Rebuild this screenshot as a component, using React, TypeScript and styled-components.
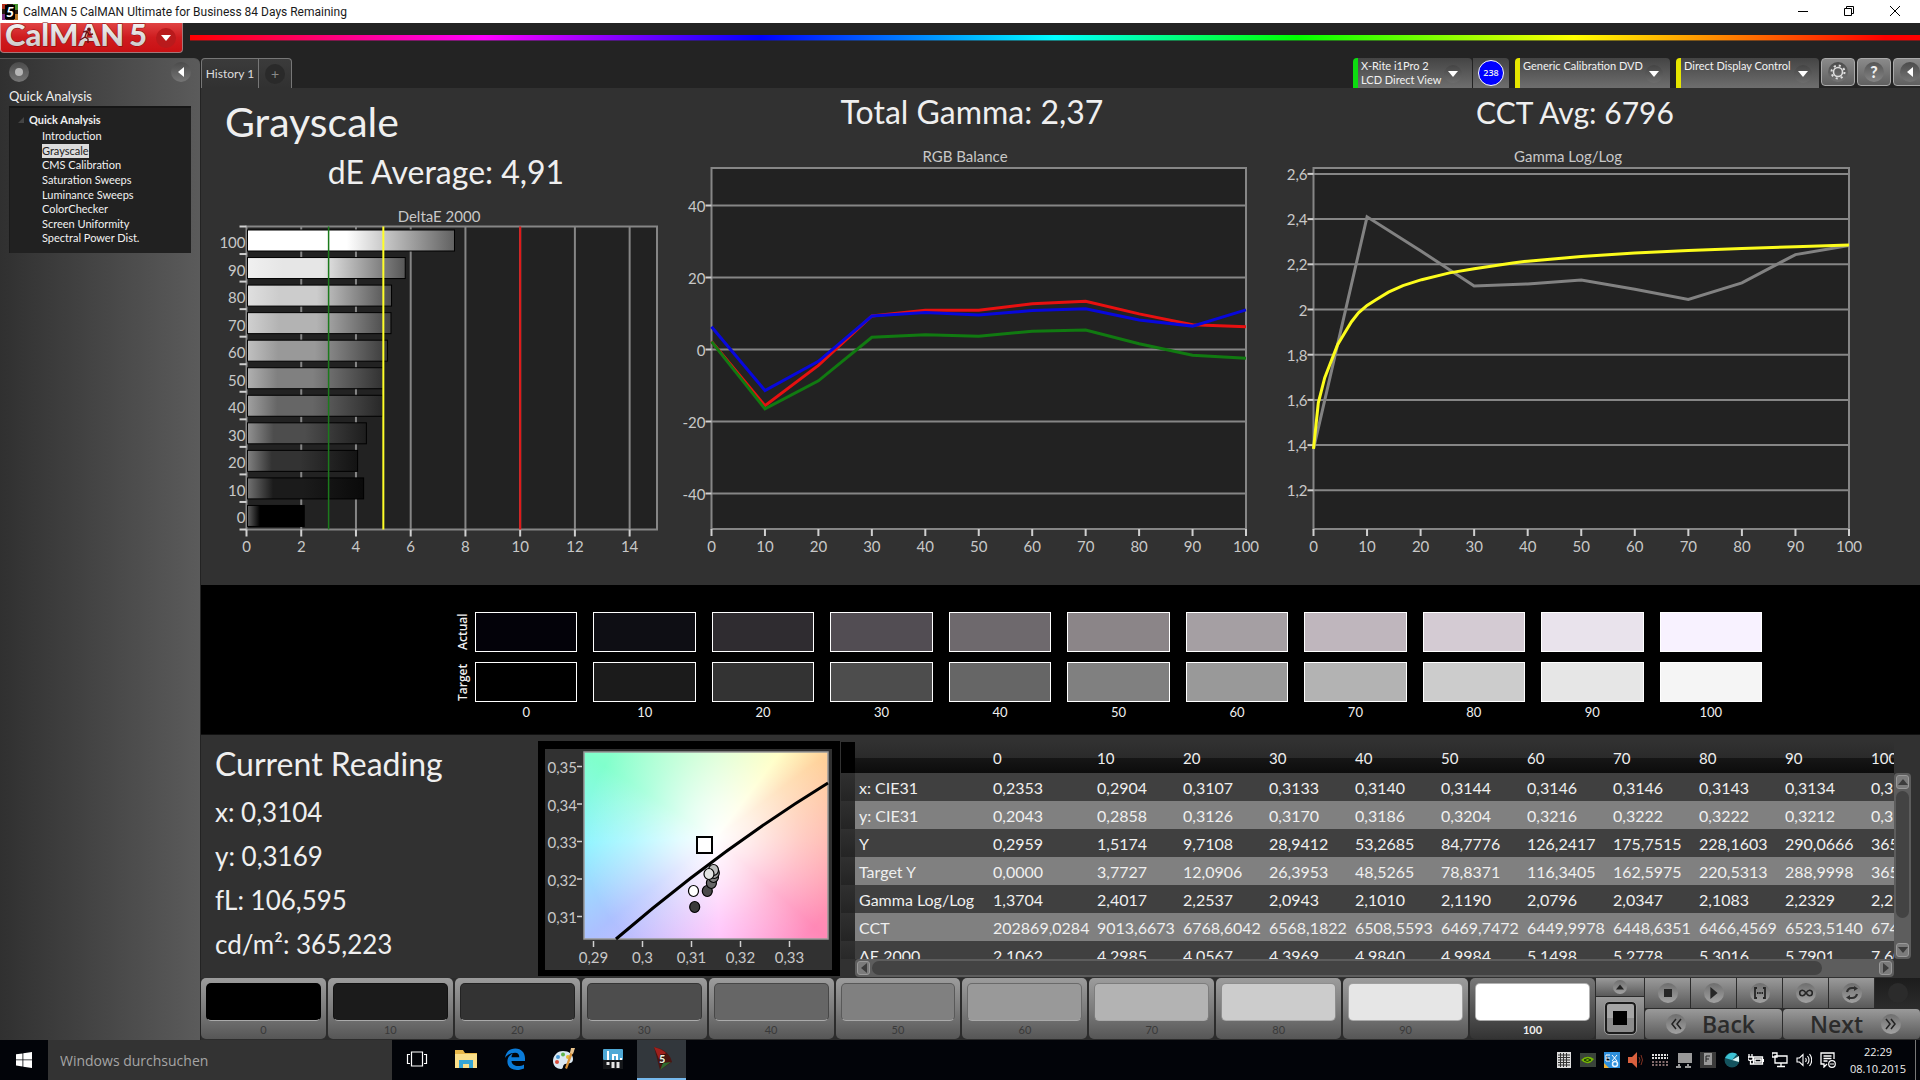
import React from "react";
import styled, { createGlobalStyle, css } from "styled-components";

const Global = createGlobalStyle`
  *, *::before, *::after { box-sizing: border-box; }
  body { margin: 0; background: #232323; font-family: Lato, "Liberation Sans", sans-serif; color: #efefef; }
  button, input { font-family: inherit; color: inherit; border: 0; margin: 0; padding: 0; background: none; }
  h1, h2, h3, p, ul { margin: 0; padding: 0; font-weight: 400; list-style: none; }
  svg { display: block; }
`;

/* ---------- data ---------- */

const LEVELS = [0, 10, 20, 30, 40, 50, 60, 70, 80, 90, 100];
const TARGET = ["#000000", "#1b1b1b", "#333333", "#4d4d4d", "#666666", "#808080", "#999999", "#b3b3b3", "#cccccc", "#e6e6e6", "#f5f5f5"];
const ACTUAL = ["#030209", "#0e0e14", "#2f2c30", "#524d53", "#6e696d", "#8b8588", "#a59fa3", "#bfb6bd", "#d4cbd3", "#e9e3ec", "#f8f2ff"];
const PATTERN = [...TARGET.slice(0, 10), "#ffffff"];
const DELTA_E = [2.11, 4.28, 4.06, 4.38, 4.98, 5, 5.15, 5.28, 5.3, 5.8, 7.6];

const RED = [2.2, -15.6, -4.4, 9.3, 10.9, 10.9, 12.7, 13.4, 9.9, 6.9, 6.3];
const BLUE = [6.3, -11.4, -3.3, 9.3, 10.3, 9.6, 10.8, 11.3, 8.2, 6.5, 11];
const GREEN = [2.2, -16.5, -8.7, 3.4, 4.1, 3.7, 5.1, 5.4, 1.6, -1.6, -2.4];

const GAMMA: [number, number][] = [
  [0, 1.383], [10, 2.41], [20, 2.26], [30, 2.104], [40, 2.113], [50, 2.13], [60, 2.09], [70, 2.044], [80, 2.118], [90, 2.243], [100, 2.283],
];
const GAMMA_TARGET: [number, number][] = [
  [0, 1.383], [0.9, 1.587], [2.1, 1.698], [4.5, 1.844], [5.7, 1.892], [7.1, 1.946], [8.4, 1.985], [10, 2.018], [11.6, 2.042],
  [14, 2.077], [16.7, 2.106], [20.2, 2.132], [25.4, 2.162], [30, 2.18], [37.2, 2.206], [40, 2.214], [50, 2.235], [60, 2.25],
  [70, 2.261], [80, 2.27], [90, 2.278], [100, 2.285],
];

const ROWS: [string, string[]][] = [
  ["x: CIE31", ["0,2353", "0,2904", "0,3107", "0,3133", "0,3140", "0,3144", "0,3146", "0,3146", "0,3143", "0,3134", "0,3104"]],
  ["y: CIE31", ["0,2043", "0,2858", "0,3126", "0,3170", "0,3186", "0,3204", "0,3216", "0,3222", "0,3222", "0,3212", "0,3169"]],
  ["Y", ["0,2959", "1,5174", "9,7108", "28,9412", "53,2685", "84,7776", "126,2417", "175,7515", "228,1603", "290,0666", "365,2230"]],
  ["Target Y", ["0,0000", "3,7727", "12,0906", "26,3953", "48,5265", "78,8371", "116,3405", "162,5975", "220,5313", "288,9998", "365,2230"]],
  ["Gamma Log/Log", ["1,3704", "2,4017", "2,2537", "2,0943", "2,1010", "2,1190", "2,0796", "2,0347", "2,1083", "2,2329", "2,2761"]],
  ["CCT", ["202869,0284", "9013,6673", "6768,6042", "6568,1822", "6508,5593", "6469,7472", "6449,9978", "6448,6351", "6466,4569", "6523,5140", "6743,2210"]],
  ["ΔE 2000", ["2,1062", "4,2985", "4,0567", "4,3969", "4,9840", "4,9984", "5,1498", "5,2778", "5,3016", "5,7901", "7,6012"]],
];

const PAGES = ["Introduction", "Grayscale", "CMS Calibration", "Saturation Sweeps", "Luminance Sweeps", "ColorChecker", "Screen Uniformity", "Spectral Power Dist."];

/* ---------- frame ---------- */

const Screen = styled.div`
  min-height: 100vh;
  display: flex;
  flex-direction: column;
  overflow: hidden;
`;

const TitleBar = styled.header`
  height: 23px;
  display: flex;
  align-items: center;
  padding-right: 2px;
  background: #fff;
  color: #1a1a1a;
  font-family: Roboto, "Open Sans", sans-serif;
  font-size: 12px;
`;
const TitleIcon = styled.svg`
  width: 16px;
  height: 16px;
  margin: 0 5px 0 2px;
`;
const TitleText = styled.span`
  flex: 1;
`;
const WindowButton = styled.button`
  width: 46px;
  height: 22px;
  display: grid;
  place-items: center;
  padding-bottom: 2px;
`;

const Header = styled.div`
  height: 35px;
  display: flex;
  align-items: flex-start;
  gap: 7px;
  background: #232323;
`;
const Logo = styled.button`
  width: 183px;
  height: 30px;
  display: flex;
  align-items: center;
  justify-content: space-between;
  padding: 0 6px 0 4px;
  background: linear-gradient(#e04343, #cf1c1f 50%, #c91013);
  border: 1px solid #a3777a;
  border-top: 0;
  border-left-color: #d88;
  border-radius: 0 0 4px 4px;
`;
const LogoSvg = styled.svg`
  overflow: visible;
`;
const MenuDisc = styled.span`
  width: 20px;
  height: 20px;
  flex: none;
  display: grid;
  place-items: center;
  border-radius: 50%;
  background: #b91a1c;
`;
const Rainbow = styled.div`
  flex: 1;
  height: 6px;
  margin-top: 12px;
  background: linear-gradient(90deg, #f00, #f0f 17%, #00f 33%, #0ff 50%, #0f0 64%, #ff0 80%, #f00 98%);
  border-bottom: 1px solid rgba(40, 40, 40, 0.6);
`;

const Body = styled.div`
  flex: 1;
  display: grid;
  grid-template-columns: 200px minmax(0, 1fr);
  column-gap: 1px;
`;

/* ---------- sidebar ---------- */

const Sidebar = styled.aside`
  background: linear-gradient(90deg, #303030, #5b5b5b);
  border-radius: 0 6px 0 0;
  border-top: 1px solid #555;
`;
const SideTools = styled.div`
  display: flex;
  justify-content: space-between;
  padding: 3px 9px 0;
`;
const Knob = styled.button`
  width: 20px;
  height: 20px;
  flex: none;
  display: grid;
  place-items: center;
  border-radius: 50%;
  background: linear-gradient(#4b4b4b, #757575);
`;
const SideTitle = styled.h2`
  padding: 5px 9px 0;
  font-size: 13px;
  line-height: 19px;
`;
const TreeBox = styled.nav`
  margin: 0 9px;
  height: 147px;
  padding: 4px 0 0 14px;
  background: #212121;
  border-top: 2px solid #161616;
  border-left: 1px solid #1a1a1a;
`;
const TreeHead = styled.h3`
  display: flex;
  align-items: center;
  gap: 5px;
  margin: 0 0 2px -6px;
  font-size: 11px;
  line-height: 15px;
  font-weight: 700;
`;
const TreeList = styled.ul`
  display: grid;
  grid-auto-rows: 1fr;
  height: 117px;
  padding-left: 18px;
  font-size: 11px;
  line-height: 14px;
`;
const TreeLink = styled.a<{ $active?: boolean }>`
  display: block;
  width: fit-content;
  color: ${(p) => (p.$active ? "#222" : "#f2f2f2")};
  background: ${(p) => (p.$active ? "#dcdcdc" : "transparent")};
  text-decoration: none;
`;

/* ---------- tab strip ---------- */

const Main = styled.main`
  display: flex;
  flex-direction: column;
  background: #313131;
`;
const TabStrip = styled.div`
  height: 30px;
  display: flex;
  background: #232323;
  overflow: hidden;
`;
const Tab = styled.button<{ $last?: boolean }>`
  width: ${(p) => (p.$last ? 33 : 58)}px;
  display: grid;
  place-items: center;
  font-size: 12px;
  color: #ddd;
  background: linear-gradient(#3b3b3b, #313131);
  border: 1px solid #777;
  border-bottom: 0;
  border-left-width: ${(p) => (p.$last ? 0 : 1)}px;
  border-radius: ${(p) => (p.$last ? "0 4px 0 0" : "4px 0 0 0")};
`;
const PlusKnob = styled.span`
  width: 20px;
  height: 20px;
  border-radius: 50%;
  background: #2a2a2a;
  color: #888;
  font-size: 14px;
  line-height: 19px;
`;
const Devices = styled.div`
  flex: none;
  display: flex;
  margin: 0 -7px 0 auto;
`;
const Device = styled.button<{ $tone: string; $width: number; $end: number }>`
  width: ${(p) => p.$width}px;
  height: 30px;
  display: flex;
  align-items: flex-start;
  justify-content: space-between;
  padding: 1px ${(p) => p.$end}px 0 3px;
  font-size: 11px;
  line-height: 14px;
  text-align: left;
  white-space: nowrap;
  color: #f2f2f2;
  background: linear-gradient(#444, #6e6e6e);
  border-left: 5px solid ${(p) => p.$tone};
  border-radius: 4px 4px 0 0;
`;
const DeviceGap = styled.span`
  width: 6px;
`;
const DropKnob = styled.span`
  width: 18px;
  height: 18px;
  margin-top: 6px;
  display: grid;
  place-items: center;
  border-radius: 50%;
  background: linear-gradient(#444, #6d6d6d);
`;
const Counter = styled.div`
  width: 36px;
  margin: 0 6px 0 1px;
  display: grid;
  place-items: center;
  background: linear-gradient(#444, #6e6e6e);
  border-radius: 0 4px 0 0;
`;
const CounterDot = styled.span`
  width: 26px;
  height: 26px;
  border: 1px solid #fff;
  border-radius: 50%;
  background: #00f;
  font-family: "Open Sans", sans-serif;
  font-size: 9px;
  line-height: 24px;
  font-weight: 600;
  text-align: center;
`;
const ToolButton = styled.button`
  width: 34px;
  height: 28px;
  margin-left: 2px;
  display: grid;
  place-items: center;
  border: 1px solid #aaa;
  border-radius: 4px;
  background: linear-gradient(#8a8a8a, #606060);
`;
const HelpKnob = styled.span`
  width: 20px;
  height: 20px;
  border-radius: 50%;
  background: linear-gradient(#555, #858585);
  font-size: 16px;
  line-height: 20px;
  font-weight: 900;
  text-align: center;
`;

/* ---------- chart row ---------- */

const Charts = styled.section`
  display: grid;
  grid-template-columns: 479fr 600fr 640fr;
`;
const ChartCell = styled.div`
  min-width: 0;
`;
const PageTitle = styled.h1`
  padding-left: 24px;
  font-size: 41px;
  line-height: 67px;
`;
const Figure = styled.h2<{ $height: number; $size?: number; $left?: number; $right?: number }>`
  padding-left: ${(p) => p.$left ?? 0}px;
  padding-right: ${(p) => p.$right ?? 0}px;
  font-size: ${(p) => p.$size ?? 32}px;
  line-height: ${(p) => p.$height}px;
  text-align: center;
`;
const ChartSvg = styled.svg`
  width: 100%;
  height: auto;
  fill: none;
  text {
    font-family: Lato, sans-serif;
    font-size: 15px;
    fill: #c8c8c8;
  }
`;

const GRID = "#868686";
const TICK = "#d0d0d0";

function mix(hex: string, toward: number, amount: number) {
  const c = parseInt(hex.slice(1, 3), 16);
  const v = Math.round(c + (toward - c) * amount);
  return `rgb(${v},${v},${v})`;
}

function DeltaEChart() {
  const x0 = 45.5, x1 = 456, y0 = 38.5, y1 = 341.5;
  const unit = (x1 - x0) / 15;
  const bin = (y1 - y0) / 11;
  return (
    <ChartSvg viewBox="0 0 479 397" role="img" aria-label="DeltaE 2000">
      <defs>
        {PATTERN.map((c, i) => (
          <linearGradient id={`bar${i}`} key={c}>
            <stop offset="0" stopColor={mix(c, 255, 0.38)} />
            <stop offset="0.22" stopColor={c} />
            <stop offset="0.48" stopColor={c} />
            <stop offset="1" stopColor={mix(c, 0, 0.62)} />
          </linearGradient>
        ))}
      </defs>
      <text x="238" y="34" textAnchor="middle">DeltaE 2000</text>
      <rect x={x0} y={y0} width={x1 - x0} height={y1 - y0} fill="#222" stroke={GRID} strokeWidth="2" />
      {[2, 4, 6, 8, 10, 12, 14].map((v) => (
        <path key={v} d={`M${x0 + v * unit} ${y0}V${y1}`} stroke={GRID} strokeWidth="2" />
      ))}
      {[0, 2, 4, 6, 8, 10, 12, 14].map((v) => (
        <g key={v}>
          <path d={`M${x0 + v * unit} ${y1}v7`} stroke={TICK} strokeWidth="2" />
          <text x={x0 + v * unit} y="364" textAnchor="middle">{v}</text>
        </g>
      ))}
      {Array.from({ length: 12 }, (_, i) => (
        <path key={i} d={`M${x0 - 7} ${y0 + i * bin}h7`} stroke={TICK} strokeWidth="2" />
      ))}
      {LEVELS.map((level, i) => {
        const top = y1 - (i + 1) * bin + 3.5;
        return (
          <g key={level}>
            <rect x={x0 + 1} y={top} width={DELTA_E[i] * unit - 1} height="21" fill={`url(#bar${i})`} stroke="#000" />
            <text x={x0 - 1} y={top + 18} textAnchor="end">{level}</text>
          </g>
        );
      })}
      <path d={`M${x0 + 3 * unit} ${y0}V${y1}`} stroke="#1c7a1c" strokeWidth="1.5" />
      <path d={`M${x0 + 5 * unit} ${y0}V${y1}`} stroke="#ffff28" strokeWidth="2" />
      <path d={`M${x0 + 10 * unit} ${y0}V${y1}`} stroke="#e01818" strokeWidth="2" />
    </ChartSvg>
  );
}

type Line = { color: string; width: number; points: [number, number][] };

function LineChart(props: {
  title: string; width: number; titleX: number; left: number; right: number;
  marks: { value: number; label: string }[]; base: number; baseY: number; scale: number; lines: Line[];
}) {
  const { left, right, base, baseY, scale } = props;
  const top = 32, bottom = 393;
  const px = (v: number) => left + ((right - left) * v) / 100;
  const py = (v: number) => baseY - (v - base) * scale;
  return (
    <ChartSvg viewBox={`0 0 ${props.width} 449`} role="img" aria-label={props.title}>
      <text x={props.titleX} y="26" textAnchor="middle">{props.title}</text>
      <rect x={left} y={top} width={right - left} height={bottom - top} fill="#222" stroke={GRID} strokeWidth="2" />
      {props.marks.map((m) => (
        <g key={m.label}>
          <path d={`M${left} ${py(m.value)}H${right}`} stroke={GRID} strokeWidth="2" />
          <path d={`M${left - 6} ${py(m.value)}h6`} stroke={TICK} strokeWidth="2" />
          <text x={left - 6} y={py(m.value) + 6} textAnchor="end">{m.label}</text>
        </g>
      ))}
      {LEVELS.map((v) => (
        <g key={v}>
          <path d={`M${px(v)} ${bottom}v7`} stroke={TICK} strokeWidth="2" />
          <text x={px(v)} y="416" textAnchor="middle">{v}</text>
        </g>
      ))}
      {props.lines.map((l) => (
        <polyline key={l.color} points={l.points.map(([x, y]) => `${px(x)},${py(y)}`).join(" ")} stroke={l.color} strokeWidth={l.width} />
      ))}
    </ChartSvg>
  );
}

const byLevel = (values: number[]) => values.map((v, i) => [i * 10, v] as [number, number]);

/* ---------- swatches ---------- */

const SwatchBand = styled.section`
  height: 149px;
  padding: 27px 158px 0 251px;
  background: #000;
  display: grid;
  grid-template-columns: 23px minmax(0, 1fr);
  grid-template-rows: 40px 40px 20px;
  row-gap: 10px;
`;
const BandLabel = styled.span`
  writing-mode: vertical-rl;
  transform: rotate(180deg);
  margin-left: 2px;
  font-family: "Open Sans", sans-serif;
  font-size: 12px;
  font-weight: 600;
  line-height: 18px;
  text-align: center;
`;
const SwatchRow = styled.div`
  display: grid;
  grid-template-columns: repeat(11, minmax(0, 1fr));
  column-gap: 16px;
`;
const Swatch = styled.div<{ $color: string }>`
  border: 1px solid #fff;
  background: ${(p) => p.$color};
`;
const SwatchLabel = styled.span`
  margin-top: -8px;
  font-size: 13px;
  line-height: 16px;
  text-align: center;
`;

/* ---------- lower row ---------- */

const Lower = styled.section`
  flex: 1;
  display: grid;
  grid-template-columns: 337px 302px minmax(0, 1fr);
  border-top: 1px solid #111;
`;
const Reading = styled.div`
  padding: 3px 0 0 14px;
`;
const ReadingTitle = styled.h2`
  font-size: 32px;
  line-height: 52px;
`;
const ReadingLine = styled.p`
  font-size: 26px;
  line-height: 44px;
`;
const CieBox = styled.div`
  margin-top: 6px;
  height: 235px;
  background: #000;
`;
const CieSvg = styled.svg`
  width: 100%;
  height: auto;
  text {
    font-family: Lato, sans-serif;
    font-size: 15px;
    fill: #c8c8c8;
  }
`;
const Gamut = styled.div`
  width: 100%;
  height: 100%;
  background:
    radial-gradient(circle at 54% 46%, #fff 0, rgba(255, 255, 255, 0.75) 22%, rgba(255, 255, 255, 0.35) 50%, rgba(255, 255, 255, 0) 80%),
    conic-gradient(from 0deg at 54% 46%, #cfffc8 0deg, #ffffb8 37deg, #ffd29a 53deg, #ffb4a8 90deg, #ff88b6 132deg, #ffb4fa 178deg, #acc0ff 232deg, #90f4ff 268deg, #80ffcc 303deg, #cfffc8 360deg);
`;

function CieChart() {
  const dots: [number, number, string][] = [
    [156.7, 166, "#3a3a3a"], [169.3, 150, "#4a4a4a"], [173.4, 142, "#666"], [175.5, 136, "#808080"],
    [176.3, 132, "#999"], [175.5, 129, "#bdbdbd"], [171, 133, "#e2e2e2"], [155.5, 150, "#fff"],
  ];
  return (
    <CieSvg viewBox="0 0 302 235" role="img" aria-label="CIE chromaticity">
      <rect x="7" y="8" width="287" height="221" fill="#313131" />
      <foreignObject x="46" y="11" width="244" height="187"><Gamut /></foreignObject>
      <rect x="46" y="11" width="244" height="187" fill="none" stroke="#999" strokeWidth="1.5" />
      {["0,35", "0,34", "0,33", "0,32", "0,31"].map((t, i) => (
        <g key={t}>
          <path d={`M39 ${25.5 + i * 37.5}h5`} stroke={TICK} strokeWidth="1.5" />
          <text x="39" y={32 + i * 37.5} textAnchor="end">{t}</text>
        </g>
      ))}
      {["0,29", "0,3", "0,31", "0,32", "0,33"].map((t, i) => (
        <g key={t}>
          <path d={`M${55.5 + i * 49} 200v6`} stroke={TICK} strokeWidth="1.5" />
          <text x={55.5 + i * 49} y="222" textAnchor="middle">{t}</text>
        </g>
      ))}
      <path d="M78 198Q184 107 290 42" fill="none" stroke="#000" strokeWidth="3" />
      <rect x="159" y="96" width="15" height="16" fill="#fff" stroke="#000" strokeWidth="2" />
      {dots.map(([x, y, c]) => <ellipse key={c} cx={x} cy={y} rx="5" ry="5.5" fill={c} stroke="#000" strokeWidth="1.2" />)}
    </CieSvg>
  );
}

const Viewer = styled.div`
  margin: 7px 9px 0 1px;
  display: grid;
  grid-template-columns: 14px minmax(0, 1fr) 17px;
  grid-template-rows: 217px 18px;
`;
const TableClip = styled.div`
  grid-column: 1 / 3;
  overflow: hidden;
`;
const Table = styled.table`
  width: 1112px;
  table-layout: fixed;
  border-collapse: collapse;
  font-size: 16px;
  text-align: left;
  white-space: nowrap;
`;
const HeadRow = styled.tr`
  height: 31px;
  background: linear-gradient(#313131, #2a2a2a 50%, #161616 52%, #0c0c0c);
`;
const DataRow = styled.tr`
  height: 28px;
  background: #404040;
  &:nth-child(even) { background: #808080; }
`;
const Cell = styled.td`
  padding: 0 0 0 4px;
`;
const Label = styled.th`
  padding: 0 0 0 4px;
  font-weight: 400;
`;
const HeadCell = styled.th`
  padding: 0 0 0 4px;
  font-size: 15px;
  font-weight: 400;
`;
const RowMark = styled.td<{ $head?: boolean }>`
  padding: 0;
  background: ${(p) => (p.$head ? "#000" : "linear-gradient(#303030, #242424)")};
`;
const track = css`
  display: flex;
  background: #5d5d5d;
  border-radius: 4px;
  gap: 2px;
  padding: 2px;
`;
const VScroll = styled.div`
  ${track}
  flex-direction: column;
  margin-top: 31px;
`;
const HScroll = styled.div`
  ${track}
  grid-column: 2;
`;
const ScrollButton = styled.button`
  flex: none;
  width: 13px;
  height: 14px;
  display: grid;
  place-items: center;
  border: 1px solid #999;
  border-radius: 3px;
  background: #7b7b7b;
`;
const Thumb = styled.div<{ $grow: number }>`
  flex: ${(p) => p.$grow};
  border-radius: 7px;
  background: #434343;
`;
const Gap = styled.div<{ $grow: number }>`
  flex: ${(p) => p.$grow};
`;

/* ---------- pattern bar ---------- */

const PatternBar = styled.section`
  height: 62px;
  display: grid;
  grid-template-columns: minmax(0, 1fr) 48px 275px;
  column-gap: 1px;
  background: #2c2c2c;
`;
const Patterns = styled.div`
  display: grid;
  grid-template-columns: repeat(11, minmax(0, 1fr));
  column-gap: 2px;
`;
const PatternButton = styled.button<{ $active: boolean }>`
  height: 61px;
  padding: 4px 5px 0;
  border-radius: 5px;
  font-size: 11px;
  font-weight: ${(p) => (p.$active ? 700 : 400)};
  line-height: 18px;
  color: ${(p) => (p.$active ? "#eee" : "#3a3a3a")};
  background: ${(p) => (p.$active ? "linear-gradient(#777, #333)" : "linear-gradient(#9c9c9c, #7d7d7d 50%, #565656)")};
`;
const PatternSwatch = styled.span<{ $color: string }>`
  display: block;
  height: 38px;
  border: 1px solid rgba(0, 0, 0, 0.3);
  border-bottom-color: #aaa;
  border-radius: 5px;
  background: ${(p) => p.$color};
`;
const Stack = styled.div`
  height: 61px;
  display: grid;
  grid-template-rows: 18px 1fr;
  row-gap: 1px;
`;
const BarButton = styled.button<{ $dim?: boolean }>`
  display: flex;
  align-items: center;
  justify-content: center;
  background: ${(p) => (p.$dim ? "linear-gradient(#1c1c1c, #2b2b2b)" : "linear-gradient(#9a9a9a, #595959)")};
`;
const Transport = styled.div`
  height: 61px;
  display: grid;
  grid-template-columns: repeat(6, 1fr);
  grid-template-rows: 1fr 1fr;
  gap: 1px;
`;
const NavButton = styled(BarButton)<{ $forward?: boolean }>`
  grid-column: span 3;
  gap: ${(p) => (p.$forward ? 18 : 16)}px;
  padding: ${(p) => (p.$forward ? "0 0 0 8px" : "0 6px 0 0")};
  border-radius: 4px;
  color: #2b2b2b;
  font-family: "Open Sans", "Noto Sans", sans-serif;
  font-size: 23px;
  font-weight: 600;
  line-height: 28px;
`;
const Disc = styled.span<{ $size?: number; $dim?: boolean }>`
  width: ${(p) => p.$size ?? 20}px;
  height: ${(p) => p.$size ?? 20}px;
  flex: none;
  display: grid;
  place-items: center;
  border-radius: 50%;
  background: ${(p) => (p.$dim ? "#2b2b2b" : "linear-gradient(#6e6e6e, #a2a2a2)")};
`;
const WindowFrame = styled.span`
  width: 31px;
  height: 32px;
  display: grid;
  place-items: center;
  border: 2px solid #1b1b1b;
  border-radius: 4px;
  outline: 1px solid #9a9a9a;
  background: linear-gradient(#a5a5a5 50%, #8b8b8b 50%);
`;
const Center = styled.span`
  width: 14px;
  height: 14px;
  background: #000;
`;

/* ---------- taskbar ---------- */

const Taskbar = styled.footer`
  height: 40px;
  display: flex;
  background: #020409;
  font-family: "Open Sans", "Noto Sans", sans-serif;
`;
const Start = styled.button`
  width: 48px;
  display: grid;
  place-items: center;
`;
const Search = styled.input`
  width: 344px;
  padding: 0 12px;
  background: #333;
  font-size: 14px;
  &::placeholder { color: #a5a5a5; opacity: 1; }
`;
const AppButton = styled.button<{ $active?: boolean }>`
  width: 49px;
  display: grid;
  place-items: center;
  background: ${(p) => (p.$active ? "#32373c" : "transparent")};
  border-bottom: 2px solid ${(p) => (p.$active ? "#76b9ed" : "transparent")};
`;
const Tray = styled.div`
  margin-left: auto;
  display: flex;
  align-items: center;
`;
const TrayButton = styled.button`
  width: 24px;
  height: 24px;
  display: grid;
  place-items: center;
`;
const Clock = styled.time`
  width: 72px;
  margin: 0 1px 0 2px;
  font-size: 11px;
  line-height: 17px;
  text-align: center;
`;
const PeekButton = styled.button`
  width: 5px;
  height: 40px;
  border-left: 1px solid #777;
`;

/* ---------- drawings ---------- */

const Triangle = ({ d, size = 10, color = "#fff" }: { d: "up" | "down" | "left" | "right"; size?: number; color?: string }) => {
  const path = { up: "M0 8L5 2l5 6z", down: "M0 2h10L5 8z", left: "M8 0v10L2 5z", right: "M2 0v10l6-5z" }[d];
  return <svg width={size} height={size} viewBox="0 0 10 10"><path d={path} fill={color} /></svg>;
};

const LogoMark = () => (
  <LogoSvg width="146" height="30" viewBox="0 0 146 30">
    <defs>
      <linearGradient id="steel" x2="0" y2="1"><stop stopColor="#fff" /><stop offset="1" stopColor="#c4c0c0" /></linearGradient>
    </defs>
    <g fontFamily="Lato, sans-serif" fontWeight="900" fontSize="31">
      <text x="0" y="23" fill="url(#steel)" stroke="#7c0b0d" strokeWidth="1" paintOrder="stroke">CalMAN</text>
      <text x="124" y="23" fill="url(#steel)" stroke="#7c0b0d" strokeWidth="1" paintOrder="stroke">5</text>
    </g>
    <g stroke="#6d1214" strokeWidth="1.4" fill="none">
      <circle cx="84" cy="6.500" r="1.200" fill="#6d1214" />
      <path d="M78 9l4-1 2 4 4-1M82 8l-2 6 3 2 0 4M80 14l-5 3" />
    </g>
  </LogoSvg>
);

const AppIcon = () => (
  <TitleIcon viewBox="0 0 16 16">
    <rect width="16" height="16" fill="#2a1a10" />
    <path d="M0 0h5v5H0z" fill="#b0301c" /><path d="M11 0h5v6h-5z" fill="#46922e" /><path d="M0 10h4v6H0z" fill="#7d2f86" /><path d="M12 10h4v6h-4z" fill="#c07a2a" />
    <rect x="3" y="1" width="10" height="14" fill="#000" />
    <text x="4" y="13" fontFamily="Lato, sans-serif" fontSize="14" fontWeight="900" fontStyle="italic" fill="#fff">5</text>
  </TitleIcon>
);

const Gear = () => (
  <svg width="18" height="18" viewBox="0 0 18 18" fill="none" stroke="#dedede">
    <circle cx="9" cy="9" r="4.500" strokeWidth="1.600" />
    <circle cx="9" cy="9" r="6.500" strokeWidth="2" strokeDasharray="2.100 3" />
  </svg>
);

const Chevrons = ({ right }: { right?: boolean }) => (
  <svg width="12" height="12" viewBox="0 0 12 12" fill="none" stroke="#222" strokeWidth="1.500">
    <path d={right ? "M1 1l4 5-4 5M6 1l4 5-4 5" : "M6 1L2 6l4 5M11 1L7 6l4 5"} />
  </svg>
);

const WinLogo = () => (
  <svg width="16" height="16" viewBox="0 0 16 16" fill="#fff"><path d="M0 2.300L6.500 1.400v6.100H0zM7.300 1.300L16 0v7.500H7.300zM0 8.300h6.500v6.200L0 13.600zM7.300 8.300H16V16l-8.700-1.300z" /></svg>
);
const TaskView = () => (
  <svg width="22" height="16" viewBox="0 0 22 16" fill="none" stroke="#fff" strokeWidth="1.200"><path d="M5.500 1h11v14h-11zM4 3.500H1.500v9H4M18 3.500h2.500v9H18" /></svg>
);
const Explorer = () => (
  <svg width="24" height="20" viewBox="0 0 24 20">
    <path d="M1 1h8l2 3h12v15H1z" fill="#e9b94a" /><path d="M1 5h22v14H1z" fill="#fbe08a" />
    <path d="M5 19v-8h14v8h-4v-4H9v4z" fill="#35a6d6" />
  </svg>
);
const Edge = () => (
  <svg width="22" height="22" viewBox="0 0 22 22" fill="#0a7bd8">
    <path d="M1 10C1.800 3.800 6 .5 11.300.5 17.500.5 21 5 21 10.300V13H7.500c.2 3.500 3.300 5 6.500 5 2.400 0 4.500-.7 6-1.600v4.100c-2 .9-4.300 1.500-7 1.500-6 0-9.600-3.500-9.600-8.400 0-3.700 2-6.700 5.600-8.100C7.900 6.500 7.600 8 7.500 9.200h7.800c0-2.700-1.200-4.500-4.200-4.500C7.300 4.700 3.500 6.600 1 10z" />
  </svg>
);
const Paint = () => (
  <svg width="24" height="24" viewBox="0 0 24 24">
    <path d="M11 4C5 4 1 9 1 14c0 5 4 8 8 8 3 0 1-4 4-5 4-1 8 0 8-5 0-5-4-8-10-8z" fill="#dbe8f2" />
    <circle cx="6" cy="10" r="2" fill="#4b9bd8" /><circle cx="11" cy="7.500" r="2" fill="#5fb54c" /><circle cx="16" cy="10" r="2" fill="#e8b830" /><circle cx="5" cy="15" r="2" fill="#d94c3c" />
    <path d="M20 1l2 2-7 19-2-1z" fill="#d8923a" /><path d="M19 1h4l-2 6-3-1z" fill="#e9c48d" />
  </svg>
);
const Mixer = () => (
  <svg width="22" height="22" viewBox="0 0 22 22">
    <rect x="1" y="1" width="20" height="11" rx="1" fill="#4fa9d6" /><rect x="1" y="12" width="20" height="9" fill="#15171a" />
    <path d="M6 3v9M11 6v6M11 7h4v5M19 10v2" stroke="#fff" strokeWidth="2" fill="none" /><path d="M6 14v3M11 14v6M16 14v6" stroke="#e8e8e8" strokeWidth="3" />
  </svg>
);
const CalmanApp = () => (
  <svg width="20" height="24" viewBox="0 0 20 24">
    <path d="M2 0Q17 3 20 15L8 23z" fill="#4b1512" /><path d="M2 0Q10 2 14 6L7 12z" fill="#a0201c" /><path d="M8 23l3-7 8-1z" fill="#2f6b30" />
    <text x="7" y="16" fontFamily="Lato, sans-serif" fontSize="11" fontWeight="900" fill="#f3efe0" stroke="#000" strokeWidth="1" paintOrder="stroke">5</text>
  </svg>
);

const trayIcons: { name: string; art: React.ReactNode }[] = [
  { name: "Grid", art: <><rect x="1" y="0" width="14" height="16" fill="#ddd" /><path d="M4.500 1v14M7.500 1v14M10.500 1v14M2 3h12M2 5.500h12M2 8h12M2 10.500h12M2 13h12" stroke="#333" /></> },
  { name: "Graphics", art: <><rect y="1" width="16" height="14" fill="#3a443a" /><path d="M1 8q6-6 13-1-6 8-13 1z" fill="#76b900" /><path d="M4 8q4-3 7 0-4 3-7 0z" fill="none" stroke="#16300a" /></> },
  { name: "Codec", art: <><rect width="16" height="16" fill="#2d8fdc" /><path d="M2 3h4M2 6h4M2 3v6h4M8 3l5 6M13 3L8 9" stroke="#fff" /><path d="M0 16v-5l5 5z" fill="#f0b030" /><circle cx="11" cy="12" r="2.500" fill="none" stroke="#e8f4ff" strokeWidth="1.500" /></> },
  { name: "Audio manager", art: <><path d="M0 5h4l5-5v16l-5-5H0z" fill="#d9603e" /><path d="M11 5q2 3 0 6M13 3q3 5 0 10" stroke="#803020" fill="none" /></> },
  { name: "Keyboard", art: <><path d="M0 3h16M0 6h16" stroke="#ddd" strokeWidth="2" strokeDasharray="2 1" /><path d="M0 10h16M0 13h16" stroke="#b09090" strokeWidth="1.500" strokeDasharray="2 1.500" /></> },
  { name: "Display", art: <><rect x="2" y="1" width="14" height="10" fill="#999" /><path d="M0 15h5M9 15h6M2 13h2M11 13h2" stroke="#ccc" strokeWidth="1.500" /></> },
  { name: "Remote", art: <><rect width="16" height="16" fill="#3b3b3b" /><rect x="4" y="1" width="8" height="12" fill="#999" /><path d="M6 4h4M6 7h3M6 4v6" stroke="#222" /></> },
  { name: "Colour profile", art: <><circle cx="8" cy="8" r="7.500" fill="#14535e" /><path d="M1 6Q6-2 13 2l-5 6z" fill="#3cc2d4" /><path d="M8 8l7-4v6z" fill="#d8f3f3" /></> },
  { name: "Battery", art: <path d="M5.500 5h9v7h-9zM7 7h6v3H7zM15.500 7v3M1 2v3M4 2v3M0 5h5v2.500q-2.500 2-5 0zM2.500 8v4H5" fill="none" stroke="#fff" strokeWidth="1.300" /> },
  { name: "Network", art: <path d="M3 4h12v7H3zM9 11v3M5 14.500h8M0 1h5v4H0z" fill="none" stroke="#fff" strokeWidth="1.300" /> },
  { name: "Volume", art: <path d="M1 6h2.500L7 2.500v11L3.500 10H1zM9.500 6q1.500 2 0 4M11.500 4q3 4 0 8M13.500 2q4.500 6 0 12" fill="none" stroke="#fff" strokeWidth="1.100" /> },
  { name: "Notifications", art: <><path d="M14 7V1H1v11h3v3l3-3M3.500 4h8M3.500 6.500h8M3.500 9h4" fill="none" stroke="#fff" strokeWidth="1.300" /><circle cx="12" cy="12" r="3.300" fill="#020409" stroke="#fff" strokeWidth="1.200" /><path d="M10 12h4" stroke="#fff" /></> },
];

/* ---------- page ---------- */

export default function App() {
  return (
    <Screen>
      <Global />
      <TitleBar>
        <AppIcon />
        <TitleText>CalMAN 5 CalMAN Ultimate for Business 84 Days Remaining</TitleText>
        <WindowButton aria-label="Minimize"><svg width="10" height="10" viewBox="0 0 10 10"><path d="M0 5.500h10" stroke="#000" /></svg></WindowButton>
        <WindowButton aria-label="Restore"><svg width="10" height="10" viewBox="0 0 10 10" fill="none" stroke="#000"><path d="M.5 2.500h7v7h-7zM2.500 2.500v-2h7v7h-2" /></svg></WindowButton>
        <WindowButton aria-label="Close"><svg width="10" height="10" viewBox="0 0 10 10"><path d="M0 0l10 10M10 0L0 10" stroke="#000" /></svg></WindowButton>
      </TitleBar>

      <Header>
        <Logo aria-label="CalMAN 5 menu">
          <LogoMark />
          <MenuDisc><Triangle d="down" /></MenuDisc>
        </Logo>
        <Rainbow />
      </Header>

      <Body>
        <Sidebar>
          <SideTools>
            <Knob aria-label="Record"><svg width="8" height="8"><circle cx="4" cy="4" r="4" fill="#b5b5b5" /></svg></Knob>
            <Knob aria-label="Collapse"><Triangle d="left" /></Knob>
          </SideTools>
          <SideTitle>Quick Analysis</SideTitle>
          <TreeBox>
            <TreeHead>
              <svg width="6" height="6"><path d="M6 0v6H0z" fill="#444" /></svg>
              Quick Analysis
            </TreeHead>
            <TreeList>
              {PAGES.map((p) => (
                <li key={p}><TreeLink href="#" $active={p === "Grayscale"}>{p}</TreeLink></li>
              ))}
            </TreeList>
          </TreeBox>
        </Sidebar>

        <Main>
          <TabStrip>
            <Tab>History 1</Tab>
            <Tab $last aria-label="Add history"><PlusKnob>+</PlusKnob></Tab>
            <Devices>
              <Device $tone="#0ddc10" $width={119} $end={10}>
                <span>X-Rite i1Pro 2<br />LCD Direct View</span>
                <DropKnob><Triangle d="down" /></DropKnob>
              </Device>
              <Counter><CounterDot>238</CounterDot></Counter>
              <Device $tone="#e6e600" $width={155} $end={7}>
                <span>Generic Calibration DVD</span>
                <DropKnob><Triangle d="down" /></DropKnob>
              </Device>
              <DeviceGap />
              <Device $tone="#e6e600" $width={143} $end={7}>
                <span>Direct Display Control</span>
                <DropKnob><Triangle d="down" /></DropKnob>
              </Device>
              <ToolButton aria-label="Settings"><Knob as="span"><Gear /></Knob></ToolButton>
              <ToolButton aria-label="Help"><HelpKnob>?</HelpKnob></ToolButton>
              <ToolButton aria-label="Collapse panel"><Knob as="span"><Triangle d="left" /></Knob></ToolButton>
            </Devices>
          </TabStrip>

          <Charts>
            <ChartCell>
              <PageTitle>Grayscale</PageTitle>
              <Figure $height={33} $left={11}>dE Average: 4,91</Figure>
              <DeltaEChart />
            </ChartCell>
            <ChartCell>
              <Figure $height={48} $right={16}>Total Gamma: 2,37</Figure>
              <LineChart
                title="RGB Balance" width={600} titleX={285} left={31.5} right={566}
                marks={[40, 20, 0, -20, -40].map((v) => ({ value: v, label: String(v) }))}
                base={0} baseY={213.5} scale={3.6}
                lines={[
                  { color: "#e81010", width: 3, points: byLevel(RED) },
                  { color: "#117a11", width: 3, points: byLevel(GREEN) },
                  { color: "#0808dc", width: 3, points: byLevel(BLUE) },
                ]}
              />
            </ChartCell>
            <ChartCell>
              <Figure $height={48} $size={30} $right={50}>CCT Avg: 6796</Figure>
              <LineChart
                title="Gamma Log/Log" width={640} titleX={288} left={33.5} right={569}
                marks={["2,6", "2,4", "2,2", "2", "1,8", "1,6", "1,4", "1,2"].map((t) => ({ value: Number(t.replace(",", ".")), label: t }))}
                base={2} baseY={173.5} scale={226}
                lines={[
                  { color: "#828282", width: 3, points: GAMMA },
                  { color: "#fcfc1c", width: 3, points: GAMMA_TARGET },
                ]}
              />
            </ChartCell>
          </Charts>

          <SwatchBand>
            <BandLabel>Actual</BandLabel>
            <SwatchRow>{ACTUAL.map((c) => <Swatch key={c} $color={c} />)}</SwatchRow>
            <BandLabel>Target</BandLabel>
            <SwatchRow>{TARGET.map((c) => <Swatch key={c} $color={c} />)}</SwatchRow>
            <span />
            <SwatchRow>{LEVELS.map((l) => <SwatchLabel key={l}>{l}</SwatchLabel>)}</SwatchRow>
          </SwatchBand>

          <Lower>
            <Reading>
              <ReadingTitle>Current Reading</ReadingTitle>
              <ReadingLine>x: 0,3104</ReadingLine>
              <ReadingLine>y: 0,3169</ReadingLine>
              <ReadingLine>fL: 106,595</ReadingLine>
              <ReadingLine>cd/m²: 365,223</ReadingLine>
            </Reading>
            <CieBox><CieChart /></CieBox>
            <Viewer>
              <TableClip>
                <Table>
                  <colgroup>
                    <col width="14" /><col width="134" /><col width="104" />
                    {LEVELS.slice(1).map((l) => <col key={l} width="86" />)}
                  </colgroup>
                  <thead>
                    <HeadRow>
                      <RowMark $head /><Cell />
                      {LEVELS.map((l) => <HeadCell key={l} scope="col">{l}</HeadCell>)}
                    </HeadRow>
                  </thead>
                  <tbody>
                    {ROWS.map(([name, values]) => (
                      <DataRow key={name}>
                        <RowMark />
                        <Label scope="row">{name}</Label>
                        {values.map((v, i) => <Cell key={i}>{v}</Cell>)}
                      </DataRow>
                    ))}
                  </tbody>
                </Table>
              </TableClip>
              <VScroll>
                <ScrollButton aria-label="Scroll up"><Triangle d="up" color="#3c3c3c" /></ScrollButton>
                <Thumb $grow={130} /><Gap $grow={21} />
                <ScrollButton aria-label="Scroll down"><Triangle d="down" color="#3c3c3c" /></ScrollButton>
              </VScroll>
              <HScroll>
                <ScrollButton aria-label="Scroll left"><Triangle d="left" color="#3c3c3c" /></ScrollButton>
                <Thumb $grow={950} /><Gap $grow={53} />
                <ScrollButton aria-label="Scroll right"><Triangle d="right" color="#3c3c3c" /></ScrollButton>
              </HScroll>
            </Viewer>
          </Lower>

          <PatternBar>
            <Patterns>
              {LEVELS.map((l, i) => (
                <PatternButton key={l} $active={l === 100}>
                  <PatternSwatch $color={PATTERN[i]} />
                  {l}
                </PatternButton>
              ))}
            </Patterns>
            <Stack>
              <BarButton aria-label="Expand"><Disc $size={14}><Triangle d="up" color="#222" size={8} /></Disc></BarButton>
              <BarButton aria-label="Pattern window"><WindowFrame><Center /></WindowFrame></BarButton>
            </Stack>
            <Transport>
              <BarButton aria-label="Stop"><Disc><svg width="8" height="8"><path d="M0 0h8v8H0z" fill="#262626" /></svg></Disc></BarButton>
              <BarButton aria-label="Play"><Disc><Triangle d="right" color="#262626" size={12} /></Disc></BarButton>
              <BarButton aria-label="Read series"><Disc><svg width="14" height="12" viewBox="0 0 14 12" fill="none" stroke="#262626" strokeWidth="1.800"><path d="M4 1H2v10h2M10 1h2v10h-2" /><path d="M4 6h6" strokeDasharray="1.500 0.750" /></svg></Disc></BarButton>
              <BarButton aria-label="Read continuous"><Disc><svg width="14" height="8" viewBox="0 0 14 8" fill="none" stroke="#262626" strokeWidth="1.600"><path d="M7 4C5.500 2 4.500 1.200 3.500 1.200a2.700 2.700 0 000 5.600C4.500 6.800 5.500 6 7 4s2.500-2.800 3.500-2.800a2.700 2.700 0 010 5.600C9.500 6.800 8.500 6 7 4z" /></svg></Disc></BarButton>
              <BarButton aria-label="Refresh"><Disc><svg width="14" height="14" viewBox="0 0 14 14" fill="none" stroke="#303030" strokeWidth="2.200"><path d="M2 6q1-4 5-4h3M12 8q-1 4-5 4H4" /><path d="M9 0l4 2.500L9 5zM5 9l-4 2.500L5 14z" fill="#303030" stroke="none" /></svg></Disc></BarButton>
              <BarButton aria-label="Status" $dim><Disc $dim /></BarButton>
              <NavButton><Disc><Chevrons /></Disc>Back</NavButton>
              <NavButton $forward>Next<Disc><Chevrons right /></Disc></NavButton>
            </Transport>
          </PatternBar>
        </Main>
      </Body>

      <Taskbar>
        <Start aria-label="Start"><WinLogo /></Start>
        <Search aria-label="Windows durchsuchen" placeholder="Windows durchsuchen" />
        <AppButton aria-label="Task view"><TaskView /></AppButton>
        <AppButton aria-label="Explorer"><Explorer /></AppButton>
        <AppButton aria-label="Edge"><Edge /></AppButton>
        <AppButton aria-label="Paint"><Paint /></AppButton>
        <AppButton aria-label="Mixer"><Mixer /></AppButton>
        <AppButton aria-label="CalMAN" $active><CalmanApp /></AppButton>
        <Tray>
          {trayIcons.map((t) => (
            <TrayButton key={t.name} aria-label={t.name}><svg width="16" height="16" viewBox="0 0 16 16">{t.art}</svg></TrayButton>
          ))}
          <Clock>22:29<br />08.10.2015</Clock>
          <PeekButton aria-label="Show desktop" />
        </Tray>
      </Taskbar>
    </Screen>
  );
}
